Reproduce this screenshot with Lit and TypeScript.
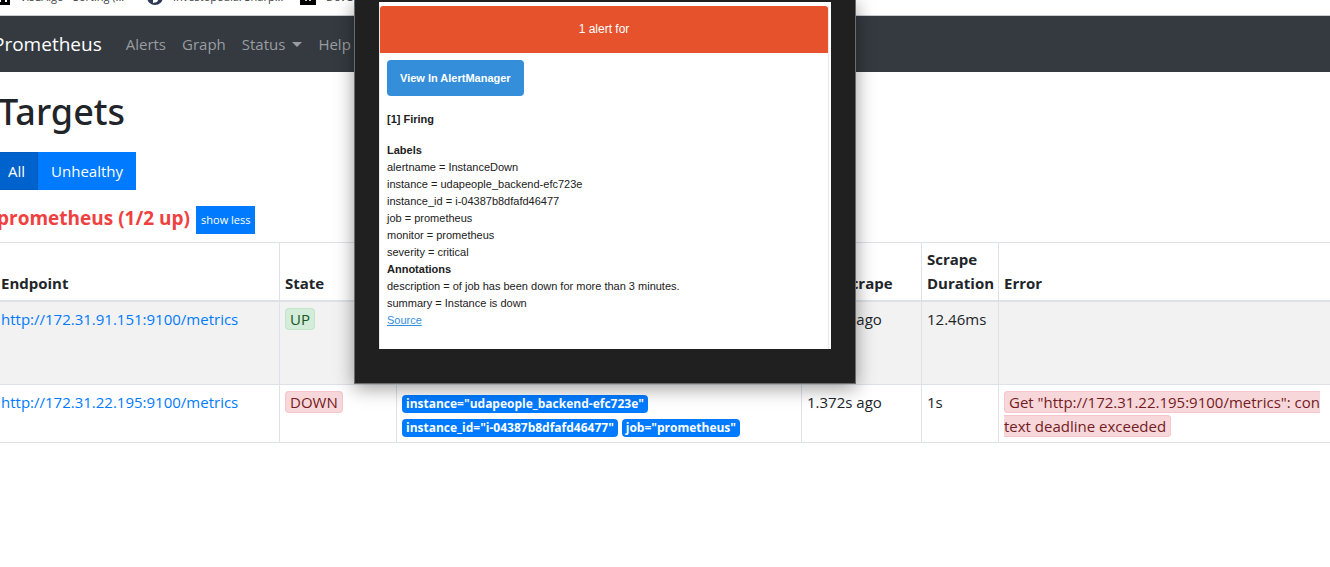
import { LitElement, html, css } from "lit";
import { customElement } from "lit/decorators.js";

@customElement("bookmark-bar")
class BookmarkBar extends LitElement {
  static styles = css`
    :host {
      display: flex;
      align-items: flex-end;
      height: 15px;
      overflow: hidden;
      border-bottom: 1px solid #c8cccf;
      background: #fff;
      color: #3c4043;
      font: 11px/16px "Open Sans", sans-serif;
    }
    .item {
      display: flex;
      align-items: center;
      gap: 10px;
      height: 36px;
      flex: none;
      color: inherit;
      text-decoration: none;
    }
    .first { width: 153px; margin-left: -6px; }
    .second { width: 153px; }
    svg { width: 16px; height: 16px; flex: none; }
  `;
  render() {
    return html`
      <a class="item first" href="#">
        <svg viewBox="0 0 16 16"><rect width="16" height="16"/><path d="M6 4v9M12 4v9M6 9h6" stroke="#fff" stroke-width="2"/></svg>
        VisuAlgo - Sorting (...
      </a>
      <a class="item second" href="#">
        <svg viewBox="0 0 16 16"><circle cx="8" cy="8" r="8" fill="#2c3a57"/><path d="M6 14L6 9l3-6 4 5-3 5z" fill="#fff"/></svg>
        Investopedia: Sharp...
      </a>
      <a class="item" href="#">
        <svg viewBox="0 0 16 16"><rect width="16" height="16"/><path d="M4 5l2 7 2-5 2 5 2-7" stroke="#fff" fill="none"/></svg>
        DevOps
      </a>
    `;
  }
}

@customElement("alert-window")
class AlertWindow extends LitElement {
  static styles = css`
    :host {
      display: block;
      box-sizing: border-box;
      padding: 2px 24px 34px 24px;
      background: #202020;
      border: 1px solid #6b6b6b;
      border-top: 0;
      box-shadow: 0 4px 18px rgba(0, 0, 0, 0.4);
      color: #212121;
      font: 11px/17px "Liberation Sans", Arial, sans-serif;
    }
    .mail {
      background: #fff;
      padding-top: 4px;
      padding-right: 2px;
    }
    .card {
      border-right: 1px solid #e9e9e9;
      border-left: 1px solid #e9e9e9;
      padding-bottom: 20px;
    }
    .banner {
      background: #e6522c;
      color: #fff;
      font-size: 12px;
      font-weight: 500;
      line-height: 47px;
      text-align: center;
      border-radius: 3px 3px 0 0;
    }
    .body { padding: 7px 7px 0; }
    .view {
      display: inline-block;
      padding: 0 13px;
      background: #348eda;
      color: #fff;
      font-weight: bold;
      line-height: 36px;
      border-radius: 4px;
      text-decoration: none;
    }
    .firing { margin: 15px 0 14px; font-weight: bold; }
    .bold { font-weight: bold; }
    .source { color: #348eda; text-decoration: underline; }
  `;
  private labels = [
    "alertname = InstanceDown",
    "instance = udapeople_backend-efc723e",
    "instance_id = i-04387b8dfafd46477",
    "job = prometheus",
    "monitor = prometheus",
    "severity = critical",
  ];
  private annotations = [
    "description = of job has been down for more than 3 minutes.",
    "summary = Instance is down",
  ];
  render() {
    return html`
      <div class="mail">
        <div class="card">
          <div class="banner">1 alert for</div>
          <div class="body">
            <a class="view" href="#">View In AlertManager</a>
            <div class="firing">[1] Firing</div>
            <div class="bold">Labels</div>
            ${this.labels.map((l) => html`<div>${l}</div>`)}
            <div class="bold">Annotations</div>
            ${this.annotations.map((l) => html`<div>${l}</div>`)}
            <a class="source" href="#">Source</a>
          </div>
        </div>
      </div>
    `;
  }
}

interface Target {
  endpoint: string;
  state: string;
  labels: string[];
  last: string;
  duration: string;
  error: string;
}

@customElement("app-root")
class AppRoot extends LitElement {
  static styles = css`
    :host {
      display: block;
      position: relative;
      min-height: 100vh;
      overflow: hidden;
      background: #fff;
      color: #212529;
      font: 15px/24px "Open Sans", sans-serif;
    }
    a { color: #007bff; text-decoration: none; }
    nav {
      display: flex;
      align-items: center;
      gap: 16px;
      height: 56px;
      padding-right: 16px;
      margin-left: -7px;
      background: #343a40;
    }
    nav a { color: #9a9da0; }
    nav .brand { color: #fff; font-size: 19px; margin-right: 8px; }
    .menu { display: flex; align-items: center; gap: 7px; }
    .menu::after {
      content: "";
      border: 5px solid transparent;
      border-top-color: currentColor;
      border-bottom: 0;
    }
    main { margin: 0 -2px 0 -5px; padding-top: 16px; }
    h1 {
      margin: 0 0 16px;
      padding-left: 3px;
      font-family: "Noto Sans", sans-serif;
      font-size: 36px;
      font-weight: 500;
      line-height: 48px;
    }
    .filters { display: flex; margin-bottom: 16px; }
    button {
      border: 1px solid #007bff;
      background: #007bff;
      color: #fff;
      font: inherit;
      padding: 6px 12px;
    }
    .filters .active { background: #0062cc; border-color: #005cbf; }
    .job { display: flex; align-items: flex-start; gap: 6px; margin-bottom: 8px; }
    h2 {
      margin: 0;
      padding-left: 2px;
      color: #f04141;
      font-size: 19px;
      line-height: 24px;
    }
    .job button { font-size: 11px; line-height: 18px; padding: 4px; }
    table {
      width: 100%;
      table-layout: fixed;
      border-collapse: collapse;
    }
    .c-endpoint { width: 284px; }
    .c-state { width: 117px; }
    .c-labels { width: 405px; }
    .c-last { width: 120px; }
    .c-duration { width: 77px; }
    th, td {
      border: 1px solid #dee2e6;
      padding: 5px 5px 4px;
      text-align: left;
      vertical-align: top;
    }
    th { vertical-align: bottom; border-bottom-width: 2px; padding: 4px 5px 5px; }
    td:last-child { padding-right: 8px; }
    tbody tr:nth-child(odd) { background: #f2f2f2; }
    tbody tr:nth-child(odd) td { padding-bottom: 5px; }
    .badge, .pill { border-radius: 4px; }
    .badge { border: 1px solid; padding: 0 4px; }
    .up { color: #155724; background: #d4edda; border-color: #c3e6cb; }
    .down { color: #721c24; background: #f8d7da; border-color: #f5c6cb; }
    .error { word-break: break-all; }
    .pill {
      display: inline-block;
      background: #007bff;
      color: #fff;
      font-size: 12px;
      font-weight: bold;
      line-height: 18px;
      padding: 0 4px;
    }
    alert-window { position: absolute; top: 0; left: 354px; width: 502px; }
  `;
  private targets: Target[] = [
    {
      endpoint: "http://172.31.91.151:9100/metrics",
      state: "UP",
      labels: ['instance="udapeople_backend-b41f0c2"', 'instance_id="i-0b1f8a4c2d6e79350"', 'job="prometheus"', 'monitor="prometheus"'],
      last: "8.352s ago",
      duration: "12.46ms",
      error: "",
    },
    {
      endpoint: "http://172.31.22.195:9100/metrics",
      state: "DOWN",
      labels: ['instance="udapeople_backend-efc723e"', 'instance_id="i-04387b8dfafd46477"', 'job="prometheus"'],
      last: "1.372s ago",
      duration: "1s",
      error: 'Get "http://172.31.22.195:9100/metrics": context deadline exceeded',
    },
  ];
  render() {
    return html`
      <bookmark-bar></bookmark-bar>
      <nav>
        <a class="brand" href="#">Prometheus</a>
        <a href="#">Alerts</a>
        <a href="#">Graph</a>
        <a class="menu" href="#">Status</a>
        <a href="#">Help</a>
      </nav>
      <main>
        <h1>Targets</h1>
        <div class="filters">
          <button class="active">All</button>
          <button>Unhealthy</button>
        </div>
        <div class="job">
          <h2>prometheus (1/2 up)</h2>
          <button>show less</button>
        </div>
        <table>
          <colgroup>
            <col class="c-endpoint" /><col class="c-state" /><col class="c-labels" />
            <col class="c-last" /><col class="c-duration" /><col />
          </colgroup>
          <thead>
            <tr>
              <th>Endpoint</th><th>State</th><th>Labels</th>
              <th>Last Scrape</th><th>Scrape Duration</th><th>Error</th>
            </tr>
          </thead>
          <tbody>
            ${this.targets.map((t) => html`
              <tr>
                <td><a href="#">${t.endpoint}</a></td>
                <td><span class="badge ${t.state.toLowerCase()}">${t.state}</span></td>
                <td>${t.labels.map((l) => html`<span class="pill">${l}</span> `)}</td>
                <td>${t.last}</td>
                <td>${t.duration}</td>
                <td>${t.error ? html`<span class="badge down error">${t.error}</span>` : ""}</td>
              </tr>
            `)}
          </tbody>
        </table>
      </main>
      <alert-window></alert-window>
    `;
  }
}
